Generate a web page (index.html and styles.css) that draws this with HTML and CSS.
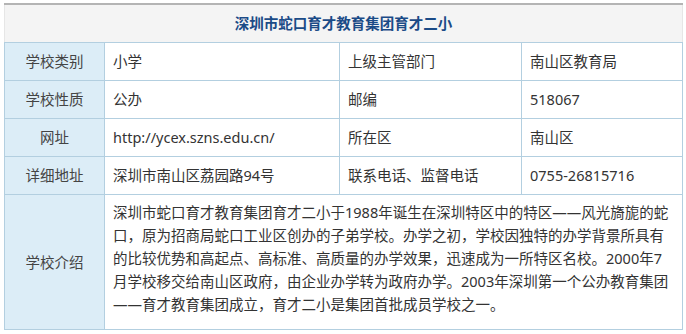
FILE: index.html
```html
<!DOCTYPE html>
<html lang="zh-CN">
<head>
<meta charset="utf-8">
<title>深圳市蛇口育才教育集团育才二小</title>
<link rel="stylesheet" href="styles.css">
</head>
<body>
<table class="info">
  <colgroup>
    <col class="c1"><col class="c2"><col class="c3"><col class="c4">
  </colgroup>
  <thead>
    <tr class="title-row"><th class="title" colspan="4">深圳市蛇口育才教育集团育才二小</th></tr>
  </thead>
  <tbody>
    <tr class="row"><td class="label">学校类别</td><td class="val">小学</td><td class="val">上级主管部门</td><td class="val">南山区教育局</td></tr>
    <tr class="row"><td class="label">学校性质</td><td class="val">公办</td><td class="val">邮编</td><td class="val">518067</td></tr>
    <tr class="row"><td class="label">网址</td><td class="val">http://ycex.szns.edu.cn/</td><td class="val">所在区</td><td class="val">南山区</td></tr>
    <tr class="row"><td class="label">详细地址</td><td class="val">深圳市南山区荔园路94号</td><td class="val">联系电话、监督电话</td><td class="val">0755-26815716</td></tr>
    <tr class="intro-row"><td class="label">学校介绍</td><td class="intro" colspan="3">深圳市蛇口育才教育集团育才二小于1988年诞生在深圳特区中的特区——风光旖旎的蛇口，原为招商局蛇口工业区创办的子弟学校。办学之初，学校因独特的办学背景所具有的比较优势和高起点、高标准、高质量的办学效果，迅速成为一所特区名校。2000年7月学校移交给南山区政府，由企业办学转为政府办学。2003年深圳第一个公办教育集团——育才教育集团成立，育才二小是集团首批成员学校之一。</td></tr>
  </tbody>
</table>
</body>
</html>
```
FILE: styles.css
```css
html, body {
  margin: 0;
  padding: 0;
  background: #ffffff;
}
body {
  padding: 3px 0 0 4px;
  font-family: "Noto Sans", "Noto Sans CJK SC", sans-serif;
  font-size: 14.5px;
  color: #333333;
}
.info {
  border-collapse: collapse;
  table-layout: fixed;
  width: 678px;
}
.c1 { width: 100px; }
.c2 { width: 235px; }
.c3 { width: 182px; }
.c4 { width: 161px; }
.info th, .info td {
  border: 1px solid #b3cfe0;
  padding: 0;
  line-height: 20px;
}
.title-row { height: 38px; }
.row { height: 38px; }
.intro-row { height: 135px; }
.info th.title {
  background: #f4f4f4;
  color: #1b4b87;
  font-weight: bold;
  font-size: 14.5px;
  text-align: center;
  border-top: 2px solid #b4b4b4;
  border-left-color: #e6e6e6;
  border-right-color: #e6e6e6;
}
.label {
  background: #dcedf7;
  text-align: center;
  color: #444444;
}
.val {
  padding-left: 8px !important;
  background: #ffffff;
  white-space: nowrap;
}
.intro {
  vertical-align: top;
  padding: 6px 10px 0 8px !important;
  line-height: 23px !important;
}
```
